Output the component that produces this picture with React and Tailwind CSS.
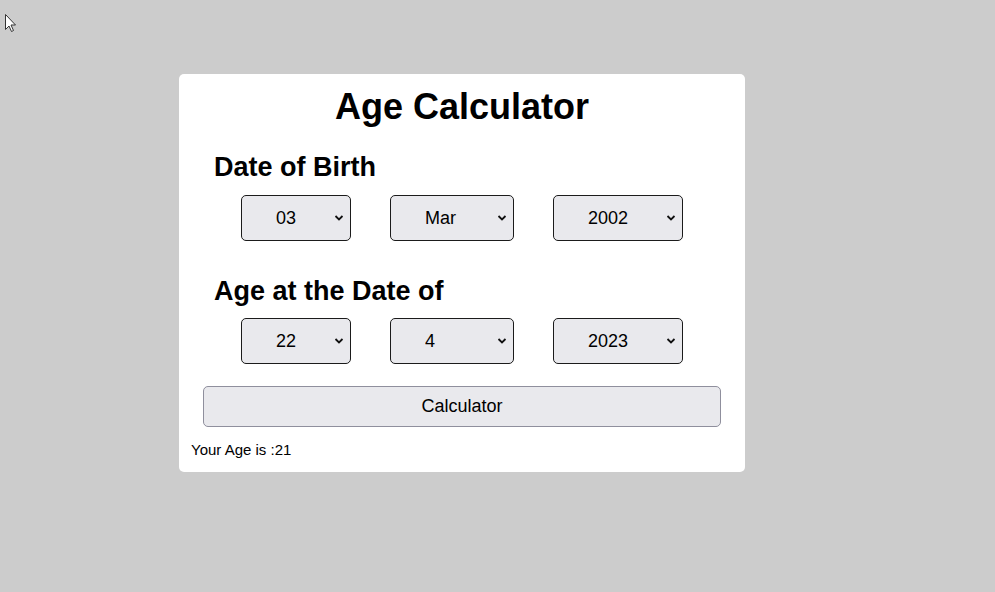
import { useState } from 'react';

const months = ['Jan', 'Feb', 'Mar', 'Apr', 'May', 'Jun', 'Jul', 'Aug', 'Sep', 'Oct', 'Nov', 'Dec'];
const days = Array.from({ length: 31 }, (_, i) => String(i + 1).padStart(2, '0'));
const years = Array.from({ length: 100 }, (_, i) => String(1950 + i));

function Chevron() {
  return (
    <svg
      className="pointer-events-none absolute right-[7px] top-1/2 -translate-y-1/2"
      width="10"
      height="7"
      viewBox="0 0 10 7"
      fill="none"
    >
      <path d="M1.5 1.5 L5 5 L8.5 1.5" stroke="#111" strokeWidth="1.8" />
    </svg>
  );
}

function Select({ value, onChange, options, width }) {
  return (
    <div className={`relative ${width}`}>
      <select
        value={value}
        onChange={(e) => onChange(e.target.value)}
        className="h-[46px] w-full appearance-none rounded-[5px] border border-[#1b1b1b] bg-[#e9e9ed] pl-[34px] text-[18px] text-black outline-none"
      >
        {options.map((o) => (
          <option key={o} value={o}>
            {o}
          </option>
        ))}
      </select>
      <Chevron />
    </div>
  );
}

export default function App() {
  const [birth, setBirth] = useState({ d: '03', m: 'Mar', y: '2002' });
  const [at, setAt] = useState({ d: '22', m: '4', y: '2023' });
  const [age, setAge] = useState(21);

  const calc = () => {
    const bm = months.indexOf(birth.m);
    const am = Number(at.m) - 1;
    let a = Number(at.y) - Number(birth.y);
    if (am < bm || (am === bm && Number(at.d) < Number(birth.d))) a -= 1;
    setAge(a);
  };

  return (
    <div className="relative min-h-screen bg-[#cccccc] pt-[74px] font-['Liberation_Sans',Arial,sans-serif] text-black">
      <svg className="absolute left-[4px] top-[13px]" width="13" height="20" viewBox="0 0 13 20">
        <path
          d="M1.5 1.5 L1.5 16.5 L5 13 L7.5 18.5 L9.5 17.5 L7 12 L11.5 12 Z"
          fill="#fff"
          stroke="#333"
          strokeWidth="1"
          strokeLinejoin="round"
        />
      </svg>

      <div className="ml-[179px] w-[566px] rounded-[5px] bg-white px-[12px] pt-[12px] pb-[13px]">
        <h1 className="text-center text-[36px] leading-[42px] font-bold">Age Calculator</h1>

        <h2 className="mt-[24px] pl-[23px] text-[27px] leading-[31px] font-bold">Date of Birth</h2>
        <div className="mt-[12px] flex justify-center gap-[39px]">
          <Select value={birth.d} onChange={(d) => setBirth({ ...birth, d })} options={days} width="w-[110px]" />
          <Select value={birth.m} onChange={(m) => setBirth({ ...birth, m })} options={months} width="w-[124px]" />
          <Select value={birth.y} onChange={(y) => setBirth({ ...birth, y })} options={years} width="w-[130px]" />
        </div>

        <h2 className="mt-[35px] pl-[23px] text-[27px] leading-[31px] font-bold">Age at the Date of</h2>
        <div className="mt-[11px] flex justify-center gap-[39px]">
          <Select
            value={at.d}
            onChange={(d) => setAt({ ...at, d })}
            options={days.map((d) => String(Number(d)))}
            width="w-[110px]"
          />
          <Select
            value={at.m}
            onChange={(m) => setAt({ ...at, m })}
            options={months.map((_, i) => String(i + 1))}
            width="w-[124px]"
          />
          <Select value={at.y} onChange={(y) => setAt({ ...at, y })} options={years} width="w-[130px]" />
        </div>

        <div className="mt-[22px] px-[12px]">
          <button
            onClick={calc}
            className="h-[41px] w-full rounded-[5px] border border-[#8f8f9d] bg-[#e9e9ed] text-[18px] text-black"
          >
            Calculator
          </button>
        </div>

        <p className="mt-[14px] text-[15px] leading-[18px]">Your Age is :{age}</p>
      </div>
    </div>
  );
}
